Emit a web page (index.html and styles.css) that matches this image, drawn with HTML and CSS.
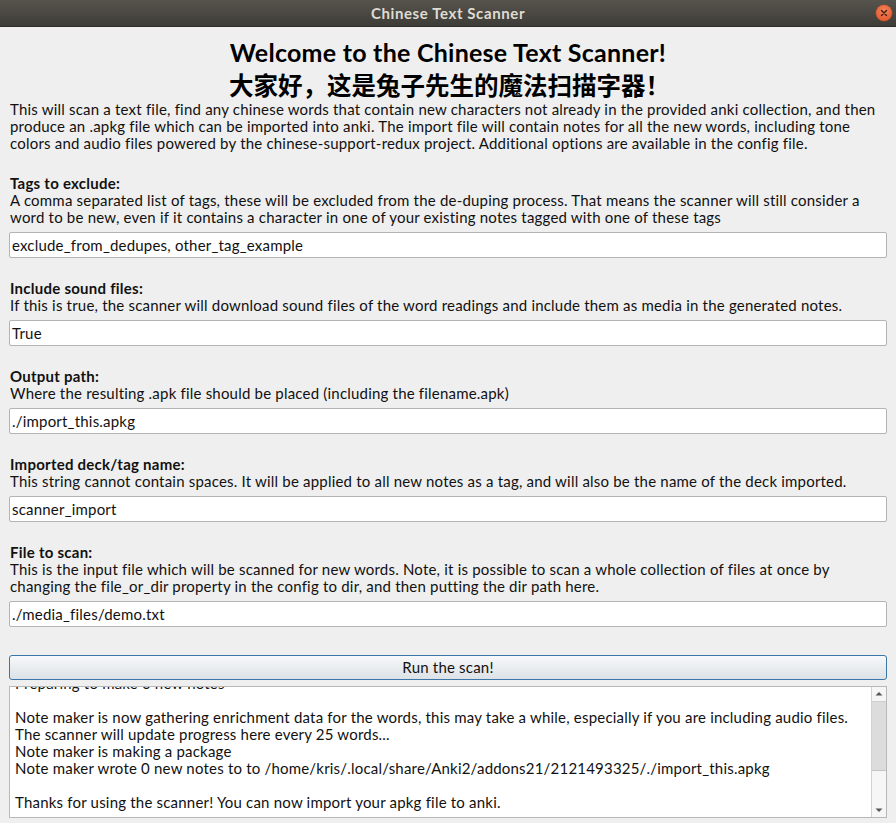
FILE: index.html
```html
<!DOCTYPE html>
<html>
<head>
<meta charset="utf-8">
<link rel="stylesheet" href="styles.css">
</head>
<body>
<div class="window">
  <div class="titlebar">
    <span class="title">Chinese Text Scanner</span>
    <span class="close">
      <svg width="16" height="16" viewBox="0 0 16 16"><path d="M5.5 5.5 L10.5 10.5 M10.5 5.5 L5.5 10.5" stroke="#3a1a10" stroke-width="1.3" stroke-linecap="round" fill="none"/></svg>
    </span>
  </div>
  <div class="content">
    <h1 class="heading">Welcome to the Chinese Text Scanner!</h1>
    <h2 class="heading-cn">大家好，这是兔子先生的魔法扫描字器！</h2>
    <p class="intro">This will scan a text file, find any chinese words that contain new characters not already in the provided anki collection, and then<br>produce an .apkg file which can be imported into anki. The import file will contain notes for all the new words, including tone<br>colors and audio files powered by the chinese-support-redux project. Additional options are available in the config file.</p>

    <div class="field field-first">
      <div class="label">Tags to exclude:</div>
      <div class="desc">A comma separated list of tags, these will be excluded from the de-duping process. That means the scanner will still consider a<br>word to be new, even if it contains a character in one of your existing notes tagged with one of these tags</div>
      <div class="input">exclude_from_dedupes, other_tag_example</div>
    </div>

    <div class="field">
      <div class="label">Include sound files:</div>
      <div class="desc">If this is true, the scanner will download sound files of the word readings and include them as media in the generated notes.</div>
      <div class="input">True</div>
    </div>

    <div class="field">
      <div class="label">Output path:</div>
      <div class="desc">Where the resulting .apk file should be placed (including the filename.apk)</div>
      <div class="input">./import_this.apkg</div>
    </div>

    <div class="field">
      <div class="label">Imported deck/tag name:</div>
      <div class="desc">This string cannot contain spaces. It will be applied to all new notes as a tag, and will also be the name of the deck imported.</div>
      <div class="input">scanner_import</div>
    </div>

    <div class="field">
      <div class="label">File to scan:</div>
      <div class="desc">This is the input file which will be scanned for new words. Note, it is possible to scan a whole collection of files at once by<br>changing the file_or_dir property in the config to dir, and then putting the dir path here.</div>
      <div class="input">./media_files/demo.txt</div>
    </div>

    <div class="run">Run the scan!</div>

    <div class="log">
      <div class="log-view">
        <div class="log-text">Preparing to make 0 new notes<br><br>Note maker is now gathering enrichment data for the words, this may take a while, especially if you are including audio files.<br>The scanner will update progress here every 25 words...<br>Note maker is making a package<br>Note maker wrote 0 new notes to to /home/kris/.local/share/Anki2/addons21/2121493325/./import_this.apkg<br><br>Thanks for using the scanner! You can now import your apkg file to anki.</div>
      </div>
      <div class="scrollbar">
        <div class="sb-btn"><svg width="14" height="14" viewBox="0 0 14 14"><path d="M3.5 8.5 L7 5 L10.5 8.5 Z" fill="#555"/></svg></div>
        <div class="sb-handle"></div>
        <div class="sb-track"></div>
        <div class="sb-btn"><svg width="14" height="14" viewBox="0 0 14 14"><path d="M3.5 5.5 L7 9 L10.5 5.5 Z" fill="#555"/></svg></div>
      </div>
    </div>
  </div>
</div>
</body>
</html>
```

FILE: styles.css
```css
html, body {
  margin: 0;
  padding: 0;
}
body {
  width: 896px;
  height: 823px;
  overflow: hidden;
  background: #efefef;
  font-family: "Lato", "Noto Sans CJK SC", sans-serif;
  color: #111;
}
.window {
  display: flex;
  flex-direction: column;
  height: 823px;
}
.titlebar {
  height: 27px;
  flex: 0 0 27px;
  display: grid;
  grid-template-columns: 1fr auto 1fr;
  align-items: center;
  background: linear-gradient(#57544d, #3d3c38);
  border-bottom: 1px solid #2f2e2b;
  box-sizing: border-box;
}
.title {
  grid-column: 2;
  color: #dfdbd2;
  font-weight: bold;
  font-size: 15px;
  letter-spacing: 0.6px;
}
.close {
  grid-column: 3;
  justify-self: end;
  margin-right: 4px;
  width: 16px;
  height: 16px;
  border-radius: 50%;
  background: radial-gradient(circle at 50% 35%, #f5825a, #de5126);
  box-shadow: 0 0 0 0.5px #b8461f;
  display: flex;
}
.content {
  padding: 9px 9px 0 9px;
  display: flex;
  flex-direction: column;
}
.heading {
  margin: 0;
  text-align: center;
  font-size: 25px;
  letter-spacing: 0.25px;
  line-height: 32px;
  font-weight: bold;
  color: #000;
}
.heading-cn {
  margin: 0;
  text-align: center;
  font-family: "Noto Sans CJK SC", sans-serif;
  font-size: 24.5px;
  line-height: 33px;
  font-weight: bold;
  color: #000;
  padding-left: 3px;
}
.intro {
  margin: 0;
  padding-left: 1px;
  font-size: 15px;
  letter-spacing: 0.2px;
  line-height: 17px;
  white-space: nowrap;
}
.field {
  margin-top: 22px;
  display: flex;
  flex-direction: column;
}
.field-first {
  margin-top: 22.5px;
}
.label {
  font-weight: bold;
  font-size: 15px;
  letter-spacing: 0.25px;
  line-height: 17px;
  padding-left: 1px;
}
.desc {
  font-size: 15px;
  letter-spacing: 0.2px;
  line-height: 17px;
  padding-left: 1px;
  white-space: nowrap;
}
.input {
  margin-top: 6px;
  height: 26px;
  box-sizing: border-box;
  background: #fff;
  border: 1px solid #b4b4b4;
  border-radius: 2px;
  padding: 0 2px;
  font-size: 15px;
  letter-spacing: 0.2px;
  display: flex;
  align-items: center;
}
.run {
  margin-top: 28px;
  height: 25px;
  box-sizing: border-box;
  border: 1px solid #3a76a8;
  border-radius: 3px;
  background: linear-gradient(#f7f8f9, #dce2e7);
  font-size: 15px;
  letter-spacing: 0.2px;
  display: flex;
  align-items: center;
  justify-content: center;
}
.log {
  margin-top: 6px;
  height: 132px;
  box-sizing: border-box;
  border: 1px solid #b8b8b8;
  background: #fff;
  display: flex;
}
.log-view {
  flex: 1;
  overflow: hidden;
  padding-left: 5px;
}
.log-text {
  margin-top: -12px;
  font-size: 15px;
  letter-spacing: 0.2px;
  line-height: 17px;
  white-space: nowrap;
}
.scrollbar {
  width: 14px;
  border-left: 1px solid #d0d0d0;
  display: flex;
  flex-direction: column;
  background: #f6f6f6;
}
.sb-btn {
  height: 14px;
  flex: 0 0 14px;
  display: flex;
}
.sb-handle {
  height: 68px;
  background: #dcdcdc;
  border-top: 1px solid #cfcfcf;
  border-bottom: 1px solid #c4c4c4;
}
.sb-track {
  flex: 1;
}
```
